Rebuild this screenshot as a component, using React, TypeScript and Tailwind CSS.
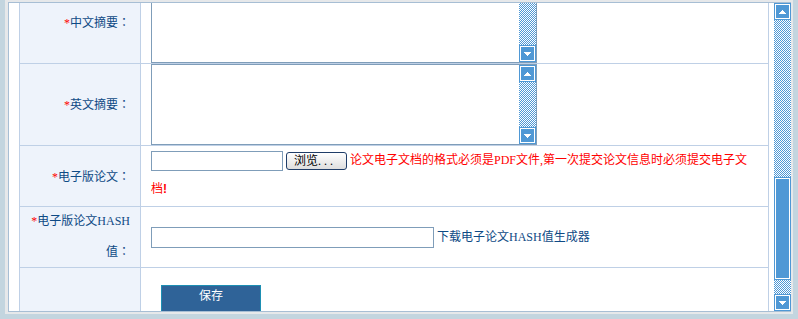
import { useId } from "react";

const Arrow = ({ dir }: { dir: "up" | "down" }) => {
  return (
    <div className="h-[17px] w-[17px] shrink-0 border border-[#4f98d5] bg-[#4f98d5]">
      <div className="flex h-full w-full items-center justify-center border border-white">
        <svg width="7" height="4" viewBox="0 0 7 4" shapeRendering="crispEdges">
          <polygon
            fill="#ffffff"
            points={dir === "up" ? "3.5,0 7,4 0,4" : "0,0 7,0 3.5,4"}
          />
        </svg>
      </div>
    </div>
  );
};

// checkered scrollbar track
const Track = ({ className }: { className: string }) => {
  const id = useId();
  return (
    <div className={`${className} overflow-hidden`}>
      <svg width="100%" height="100%" shapeRendering="crispEdges">
        <defs>
          <pattern id={id} width="2" height="2" patternUnits="userSpaceOnUse">
            <rect width="2" height="2" fill="#ffffff" />
            <rect x="0" y="0" width="1" height="1" fill="#4f98d5" />
            <rect x="1" y="1" width="1" height="1" fill="#4f98d5" />
          </pattern>
        </defs>
        <rect width="100%" height="100%" fill={`url(#${id})`} />
      </svg>
    </div>
  );
};

const MemoBox = () => {
  return (
    <div className="flex h-[81px] w-[386px] border border-[#7f9db9] bg-white">
      <textarea className="h-full flex-1 resize-none bg-white outline-none"></textarea>
      <div className="flex w-[17px] flex-col">
        <Arrow dir="up" />
        <Track className="flex-1" />
        <Arrow dir="down" />
      </div>
    </div>
  );
};

const Colon = () => (
  <span className="font-['Noto_Sans_CJK_TC',sans-serif]">：</span>
);

const Label = ({ children }: { children: React.ReactNode }) => {
  return (
    <div className="flex items-center justify-end border-r border-b border-[#bfd0e6] bg-[#eef3fb] pr-[10px] text-right leading-[29px] text-[#0e4a85]">
      <div>{children}</div>
    </div>
  );
};

const Star = () => <span className="text-[#ff0000]">*</span>;

export default function App() {
  return (
    <div className="h-[319px] w-[798px] overflow-hidden bg-[#c3d5df] px-[5px] pb-[5px] font-['Liberation_Serif','Noto_Sans_CJK_SC',serif] text-[12px]">
      <div className="h-full bg-[#e6e8ea] pt-[2px] pr-[2px] pb-[2px] pl-[3px]">
        <div className="flex h-full border-t border-b border-l border-[#a7bed4]">
          <div className="flex-1 overflow-hidden bg-white pl-[10px]">
            <div className="mt-[-21px] grid w-[750px] grid-cols-[121px_628px] border-l border-[#bfd0e6]">
              {/* 中文摘要 */}
              <Label>
                <Star />
                中文摘要
                <Colon />
              </Label>
              <div className="border-r border-b border-[#bfd0e6] pl-[10px]">
                <MemoBox />
              </div>

              {/* 英文摘要 */}
              <Label>
                <Star />
                英文摘要
                <Colon />
              </Label>
              <div className="border-r border-b border-[#bfd0e6] pl-[10px]">
                <MemoBox />
              </div>

              {/* 电子版论文 */}
              <Label>
                <Star />
                电子版论文
                <Colon />
              </Label>
              <div className="h-[61px] border-r border-b border-[#bfd0e6] pl-[10px] leading-[29px]">
                <div className="flex h-[29px] items-center">
                  <input
                    type="text"
                    className="h-[20px] w-[132px] border border-[#7f9db9] bg-white outline-none"
                  />
                  <button className="ml-[3px] flex h-[18px] w-[61px] items-center justify-center rounded-[3px] border border-[#1f3d68] bg-linear-to-b from-white to-[#dedede] pr-[3px] leading-none text-black">
                    浏览<span className="tracking-[3px]">...</span>
                  </button>
                  <span className="ml-[3px] text-[#ff0000]">
                    论文电子文档的格式必须是PDF文件,第一次提交论文信息时必须提交电子文
                  </span>
                </div>
                <div className="flex h-[29px] items-center text-[#ff0000]">
                  档<span className="font-['Liberation_Sans',sans-serif] font-bold">!</span>
                </div>
              </div>

              {/* HASH */}
              <div className="flex items-start justify-end border-r border-b border-[#bfd0e6] bg-[#eef3fb] pr-[10px] text-right leading-[29px] text-[#0e4a85]">
                <div>
                  <Star />
                  电子版论文HASH
                  <br />
                  值<Colon />
                </div>
              </div>
              <div className="flex h-[61px] items-center border-r border-b border-[#bfd0e6] pl-[10px]">
                <input
                  type="text"
                  className="h-[21px] w-[283px] border border-[#7f9db9] bg-white outline-none"
                />
                <span className="ml-[3px] text-[#0e4a85]">下载电子论文HASH值生成器</span>
              </div>

              {/* 保存 */}
              <div className="h-[60px] border-r border-[#bfd0e6] bg-[#eef3fb]"></div>
              <div className="h-[60px] border-r border-[#bfd0e6] pt-[17px] pl-[20px]">
                <button className="flex h-[30px] w-[100px] items-center justify-center border border-[#1d8fb3] bg-[#2f6398] pb-[8px] text-white">
                  保存
                </button>
              </div>
            </div>
          </div>

          <div className="flex w-[17px] flex-col">
            <Arrow dir="up" />
            <Track className="h-[157px]" />
            <div className="h-[103px] border border-[#4f98d5] bg-[#4f98d5]">
              <div className="h-full w-full border border-white"></div>
            </div>
            <Track className="flex-1" />
            <Arrow dir="down" />
          </div>
        </div>
      </div>
    </div>
  );
}
